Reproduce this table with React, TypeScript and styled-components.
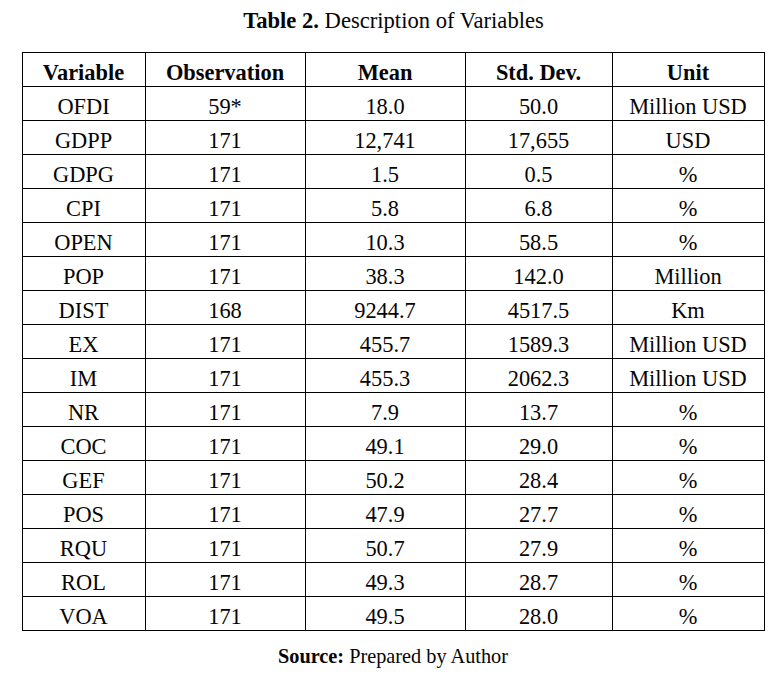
import React from "react";
import styled, { createGlobalStyle } from "styled-components";

const Global = createGlobalStyle`
  html, body { margin: 0; padding: 0; background: #ffffff; }
  body { font-family: "Liberation Serif", "Times New Roman", serif; color: #050505; }
`;

const Page = styled.div`
  width: 780px;
  height: 681px;
  box-sizing: border-box;
  padding: 8px 0 0 22px;
  display: flex;
  flex-direction: column;
  align-items: flex-start;
  font-family: "Liberation Serif", "Times New Roman", serif;
`;

const Figure = styled.div`
  width: 742px;
  display: flex;
  flex-direction: column;
  align-items: center;
`;

const Caption = styled.div`
  font-size: 22.6px;
  line-height: 26px;
  white-space: nowrap;
  margin-bottom: 18px;
  padding-left: 1px;
`;

const Strong = styled.span`
  font-weight: 700;
`;

const Table = styled.table`
  width: 742px;
  table-layout: fixed;
  border-collapse: collapse;
  border: 1px solid #000;
  font-family: "Liberation Serif", "Times New Roman", serif;
  color: #050505;
`;

const HeadCell = styled.th`
  border: 1px solid #000;
  height: 34px;
  box-sizing: border-box;
  padding: 7px 0 0;
  font-size: 22.4px;
  line-height: 26px;
  font-weight: 700;
  text-align: center;
  vertical-align: middle;
  white-space: nowrap;
`;

const Cell = styled.td`
  border: 1px solid #000;
  height: 34px;
  box-sizing: border-box;
  padding: 7px 0 0;
  font-size: 22.4px;
  line-height: 26px;
  text-align: center;
  vertical-align: middle;
  white-space: nowrap;
`;

const Source = styled.div`
  margin-top: 13px;
  font-size: 20.3px;
  line-height: 24px;
  white-space: nowrap;
`;

const columns = [
  { title: "Variable", width: 123 },
  { title: "Observation", width: 160 },
  { title: "Mean", width: 160 },
  { title: "Std. Dev.", width: 147 },
  { title: "Unit", width: 152 },
];

const rows: string[][] = [
  ["OFDI", "59*", "18.0", "50.0", "Million USD"],
  ["GDPP", "171", "12,741", "17,655", "USD"],
  ["GDPG", "171", "1.5", "0.5", "%"],
  ["CPI", "171", "5.8", "6.8", "%"],
  ["OPEN", "171", "10.3", "58.5", "%"],
  ["POP", "171", "38.3", "142.0", "Million"],
  ["DIST", "168", "9244.7", "4517.5", "Km"],
  ["EX", "171", "455.7", "1589.3", "Million USD"],
  ["IM", "171", "455.3", "2062.3", "Million USD"],
  ["NR", "171", "7.9", "13.7", "%"],
  ["COC", "171", "49.1", "29.0", "%"],
  ["GEF", "171", "50.2", "28.4", "%"],
  ["POS", "171", "47.9", "27.7", "%"],
  ["RQU", "171", "50.7", "27.9", "%"],
  ["ROL", "171", "49.3", "28.7", "%"],
  ["VOA", "171", "49.5", "28.0", "%"],
];

export default function App() {
  return (
    <>
      <Global />
      <Page>
        <Figure>
          <Caption>
            <Strong>Table 2.</Strong> Description of Variables
          </Caption>
          <Table>
            <colgroup>
              {columns.map((c) => (
                <col key={c.title} style={{ width: c.width }} />
              ))}
            </colgroup>
            <thead>
              <tr>
                {columns.map((c) => (
                  <HeadCell key={c.title}>{c.title}</HeadCell>
                ))}
              </tr>
            </thead>
            <tbody>
              {rows.map((r) => (
                <tr key={r[0]}>
                  {r.map((v, i) => (
                    <Cell key={i}>{v}</Cell>
                  ))}
                </tr>
              ))}
            </tbody>
          </Table>
          <Source>
            <Strong>Source:</Strong> Prepared by Author
          </Source>
        </Figure>
      </Page>
    </>
  );
}
